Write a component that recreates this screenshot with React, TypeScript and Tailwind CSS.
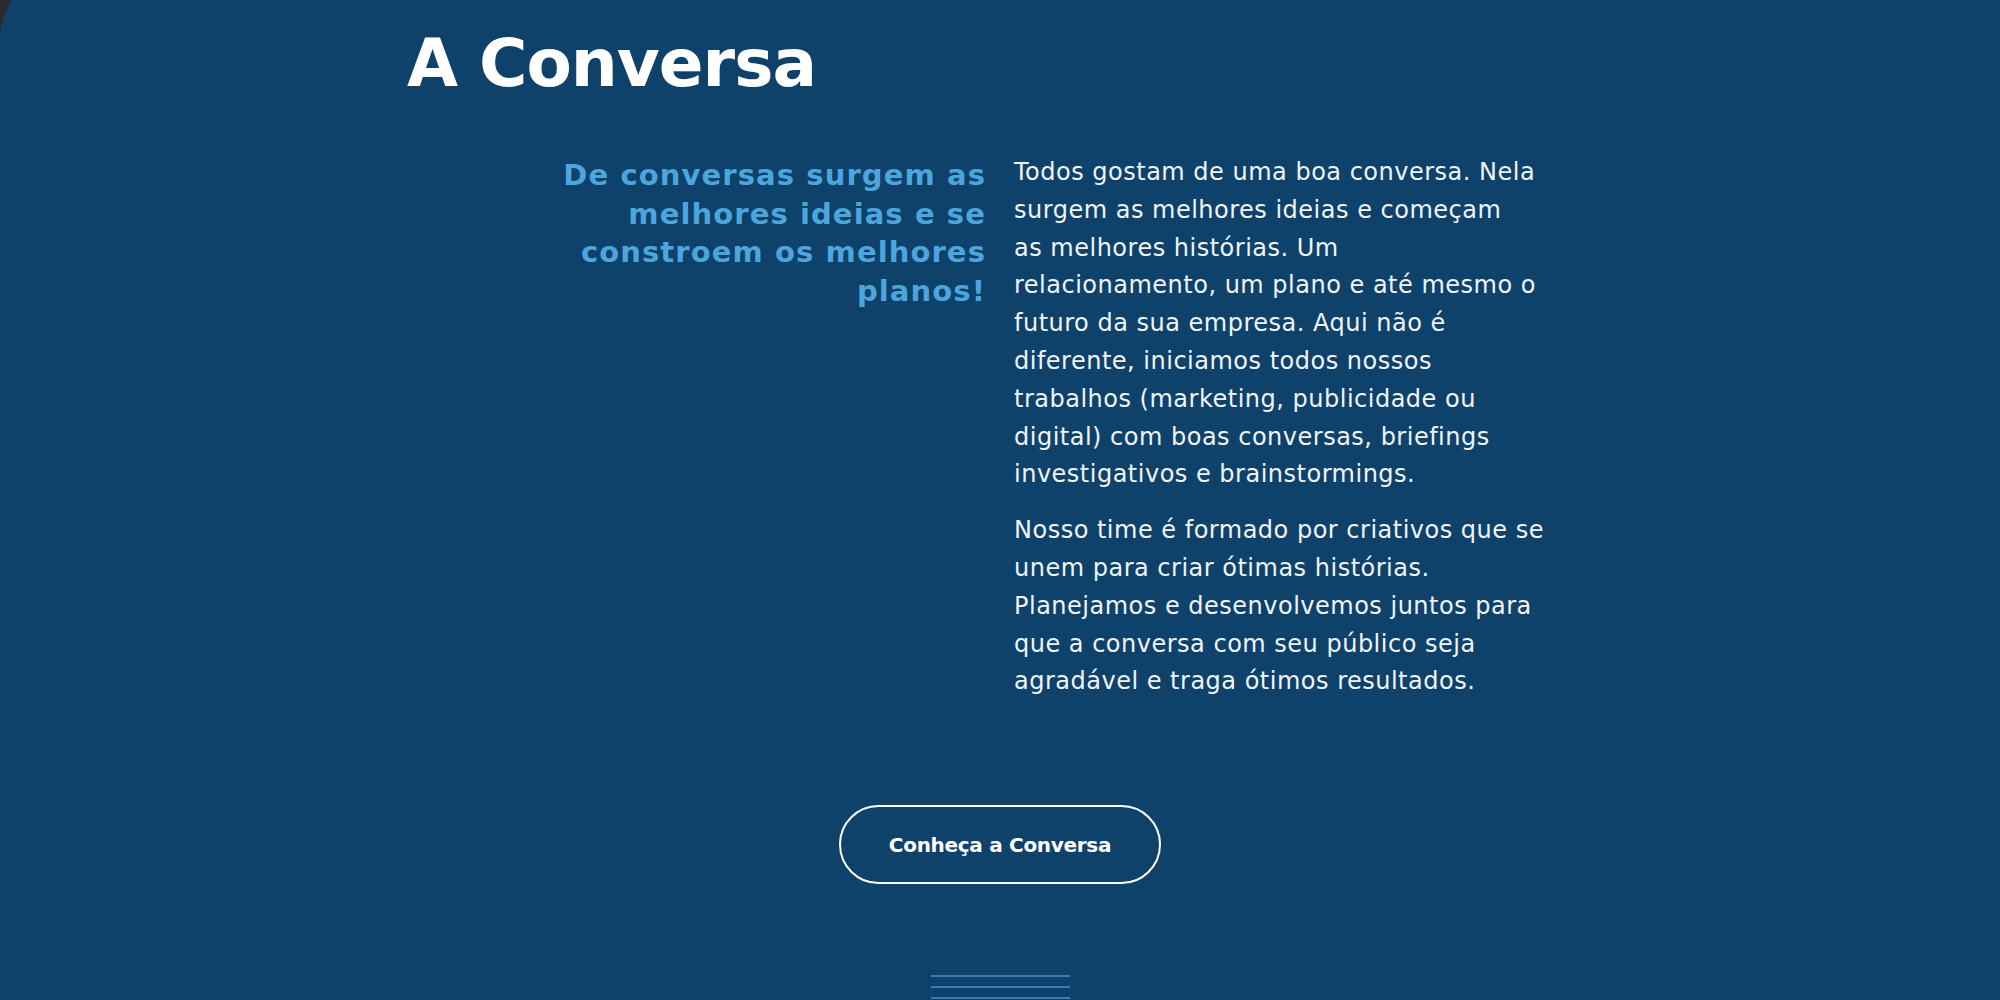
const body1 = [
  'Todos gostam de uma boa conversa. Nela',
  'surgem as melhores ideias e começam',
  'as melhores histórias. Um',
  'relacionamento, um plano e até mesmo o',
  'futuro da sua empresa. Aqui não é',
  'diferente, iniciamos todos nossos',
  'trabalhos (marketing, publicidade ou',
  'digital) com boas conversas, briefings',
  'investigativos e brainstormings.',
];

const body2 = [
  'Nosso time é formado por criativos que se',
  'unem para criar ótimas histórias.',
  'Planejamos e desenvolvemos juntos para',
  'que a conversa com seu público seja',
  'agradável e traga ótimos resultados.',
];

const lead = ['De conversas surgem as', 'melhores ideias e se', 'constroem os melhores', 'planos!'];

function Lines({ lines }: { lines: string[] }) {
  return (
    <>
      {lines.map((l, i) => (
        <span key={i} className="block whitespace-nowrap">
          {l}
        </span>
      ))}
    </>
  );
}

export default function App() {
  return (
    <div className="w-[2000px] h-[1000px] bg-[#2a2b2d] overflow-hidden font-['DejaVu_Sans',sans-serif]">
      {/* panel starts a little above the viewport, only the tail of its corner shows */}
      <section className="-mt-[33px] h-[1033px] bg-[#0e426b] rounded-tl-[73px] flex flex-col items-center">
        {/* Heading */}
        <div className="w-[1186px] pt-[61px] shrink-0">
          <h1 className="text-[66px] leading-[72px] font-bold text-white tracking-[-1px]">A Conversa</h1>
        </div>

        {/* Two columns */}
        <div className="w-[1090px] grid grid-cols-2 gap-[28px] mt-[54px] shrink-0">
          <p className="pt-[2px] text-right text-[29px] leading-[38.5px] font-bold text-[#4ca6dd] tracking-[1.1px]">
            <Lines lines={lead} />
          </p>
          <div className="text-[24px] leading-[37.8px] text-[#f1f4f7] tracking-[0.5px]">
            <p>
              <Lines lines={body1} />
            </p>
            <p className="mt-[18px]">
              <Lines lines={body2} />
            </p>
          </div>
        </div>

        {/* Call to action */}
        <button className="shrink-0 mt-[104px] w-[322px] h-[79px] rounded-full border-2 border-white text-white text-[20px] font-bold tracking-[-0.3px]">
          Conheça a Conversa
        </button>

        {/* Decorative lines */}
        <div className="shrink-0 mt-[91px] w-[139px] flex flex-col gap-[9px]">
          <div className="h-[2px] bg-[#3b7db3]" />
          <div className="h-[2px] bg-[#3b7db3]" />
          <div className="h-[2px] bg-[#3b7db3]" />
        </div>
      </section>
    </div>
  );
}
